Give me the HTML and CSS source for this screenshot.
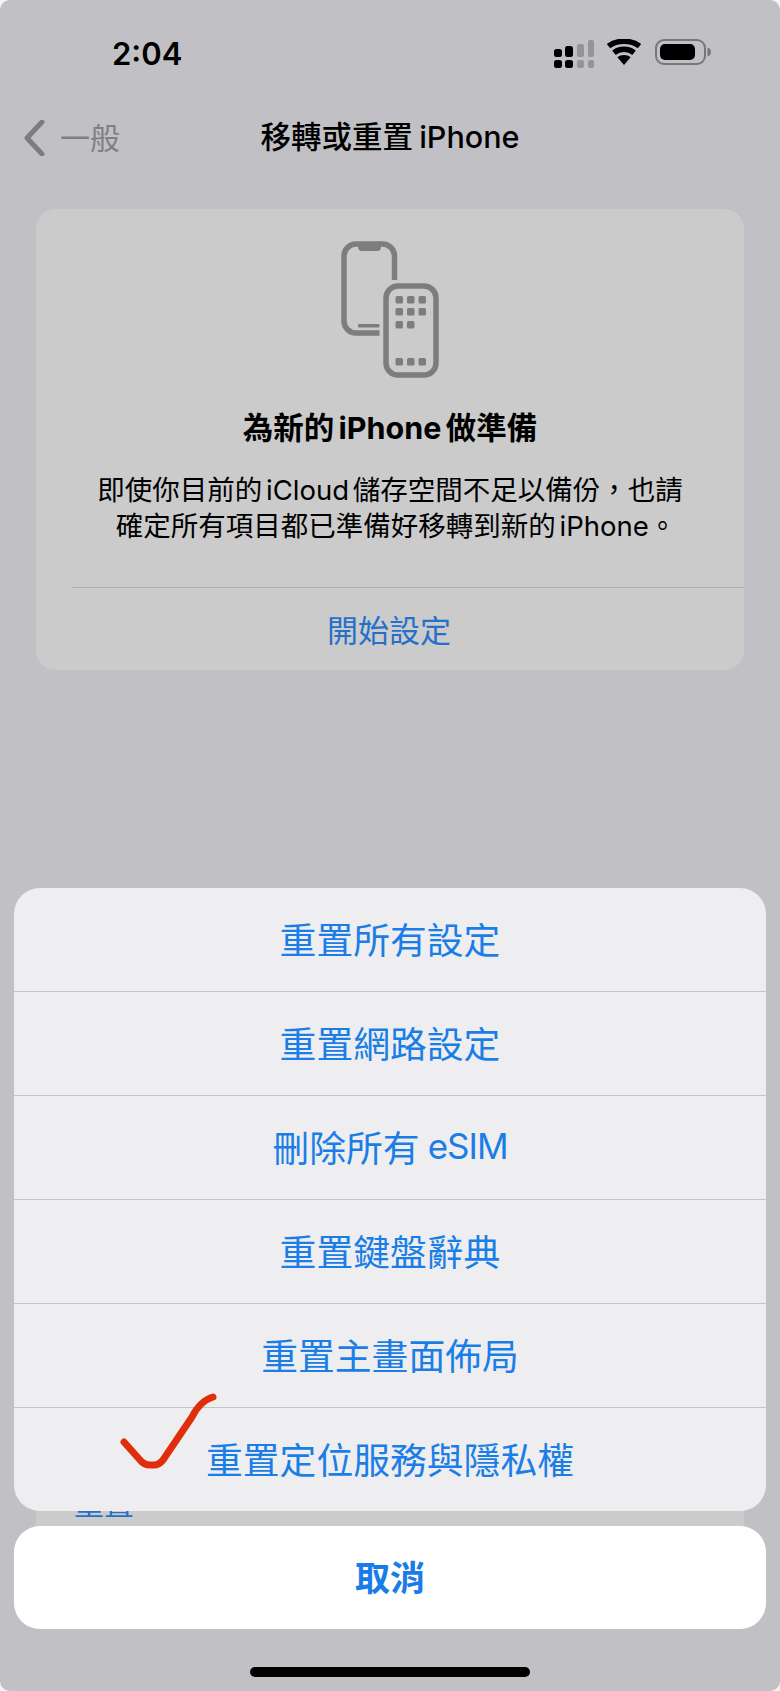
FILE: index.html
```html
<!DOCTYPE html>
<html lang="zh-Hant">
<head>
<meta charset="utf-8">
<title>移轉或重置 iPhone</title>
<link rel="stylesheet" href="styles.css">
</head>
<body>
<div class="screen">
  <header class="status">
    <span class="time">2:04</span>
    <div class="status-icons">
      <svg class="signal" width="42" height="30" viewBox="0 0 42 30">
        <rect x="1" y="10" width="8" height="8" rx="2.5"/>
        <rect x="1" y="21" width="8" height="8" rx="2.5"/>
        <rect x="12" y="7" width="8" height="11" rx="2.5"/>
        <rect x="12" y="21" width="8" height="8" rx="2.5"/>
        <g class="dim">
          <rect x="24" y="5" width="7" height="13" rx="2"/>
          <rect x="24" y="21" width="7" height="8" rx="2"/>
          <rect x="35" y="1" width="6" height="17" rx="2"/>
          <rect x="35" y="21" width="6" height="8" rx="2"/>
        </g>
      </svg>
      <svg class="wifi" width="36" height="26" viewBox="0 0 36 26">
        <path d="M18 26 11.400 18.200C15 15.200 21 15.200 24.600 18.200Z"/>
        <path d="M8 13.800 C13.300 9.200 22.700 9.200 28 13.800" class="arc"/>
        <path d="M2.500 7.200 C10.800 0.600 25.200 0.600 33.500 7.200" class="arc"/>
      </svg>
      <svg class="battery" width="57" height="26" viewBox="0 0 57 26">
        <rect x="1" y="1" width="49" height="24" rx="8" class="shell"/>
        <rect x="5" y="5" width="35" height="16" rx="5"/>
        <path d="M52.500 8.500C55 9 56 11 56 13S55 17 52.500 17.500Z" class="nub"/>
      </svg>
    </div>
  </header>

  <nav class="nav">
    <div class="back">
      <svg width="22" height="36" viewBox="0 0 22 36"><path d="M19 2 4 18 19 34"/></svg>
      <span>一般</span>
    </div>
    <h1 class="nav-title">移轉或重置 iPhone</h1>
  </nav>

  <section class="card card-main">
    <svg class="phones" width="100" height="138" viewBox="40 20 100 138">
      <path class="ph" d="M94.500 60V36A12 12 0 0 0 82.500 24H56A12 12 0 0 0 44 36V101A12 12 0 0 0 56 113H79.500"/>
      <path class="fill" d="M58 24H81V27Q81 31 77 31H62Q58 31 58 27Z"/>
      <rect class="fill" x="58" y="104" width="21.500" height="3.500" rx="1"/>
      <rect class="ph" x="86" y="66" width="50" height="89" rx="12"/>
      <g class="fill">
        <rect x="95.500" y="76" width="7.500" height="7.500" rx="1.500"/>
        <rect x="107" y="76" width="7.500" height="7.500" rx="1.500"/>
        <rect x="118.500" y="76" width="7.500" height="7.500" rx="1.500"/>
        <rect x="95.500" y="88" width="7.500" height="7.500" rx="1.500"/>
        <rect x="107" y="88" width="7.500" height="7.500" rx="1.500"/>
        <rect x="118.500" y="88" width="7.500" height="7.500" rx="1.500"/>
        <rect x="95.500" y="101" width="7.500" height="7.500" rx="1.500"/>
        <rect x="107" y="101" width="7.500" height="7.500" rx="1.500"/>
        <rect x="95.500" y="138" width="7.500" height="7.500" rx="1.500"/>
        <rect x="107" y="138" width="7.500" height="7.500" rx="1.500"/>
        <rect x="118.500" y="138" width="7.500" height="7.500" rx="1.500"/>
      </g>
    </svg>
    <h2 class="card-title">為新的 iPhone 做準備</h2>
    <p class="card-body">即使你目前的 iCloud 儲存空間不足以備份，也請<br>確定所有項目都已準備好移轉到新的 iPhone<span class="stop">。</span></p>
    <div class="card-action"><span>開始設定</span></div>
  </section>

  <section class="card card-lower">
    <span class="lower-link">重置</span>
  </section>

  <div class="sheet-wrap">
    <div class="sheet">
      <div class="sheet-row">重置所有設定</div>
      <div class="sheet-row">重置網路設定</div>
      <div class="sheet-row">刪除所有 <span class="latin">eSIM</span></div>
      <div class="sheet-row">重置鍵盤辭典</div>
      <div class="sheet-row">重置主畫面佈局</div>
      <div class="sheet-row">重置定位服務與隱私權</div>
    </div>
    <div class="cancel">取消</div>
  </div>

  <svg class="check" width="110" height="90" viewBox="115 1390 110 90">
    <path d="M124 1442 140 1460Q144 1465 150 1465H154Q159 1465 163 1460L192 1417Q200 1401 213 1397"/>
  </svg>

  <div class="home"></div>
</div>
</body>
</html>
```

FILE: styles.css
```css
* { box-sizing: border-box; }

html, body {
  margin: 0;
  padding: 0;
  background: #f4f4f6;
}

body {
  font-family: "Inter", "Noto Sans CJK TC", "Noto Sans", sans-serif;
  color: #000;
}

.screen {
  position: relative;
  width: 780px;
  height: 1691px;
  overflow: hidden;
  background: #c1c0c5;
  border-radius: 10px;
}

.status {
  height: 106px;
  padding: 35px 68px 0 112px;
  display: flex;
  justify-content: space-between;
  align-items: flex-start;
}

.time {
  font-size: 31px;
  font-weight: 600;
  line-height: 38px;
}

.status-icons {
  display: flex;
  align-items: flex-start;
  gap: 13px;
  padding-top: 2px;
}

.signal { margin-top: 2px; margin-right: -2px; fill: #000; }
.signal .dim { fill: #94949a; }

.wifi { fill: #000; margin-top: 2px; }
.wifi .arc { fill: none; stroke: #000; stroke-width: 5.500; }

.battery { margin-top: 2px; fill: #000; }
.battery .shell { fill: none; stroke: #77777b; stroke-width: 2; }
.battery .nub { fill: #77777b; }

.nav {
  position: relative;
  height: 103px;
  display: flex;
  align-items: flex-start;
  justify-content: center;
}

.back {
  position: absolute;
  left: 23px;
  top: 13px;
  display: flex;
  align-items: center;
  gap: 15px;
  color: #808084;
  font-size: 30px;
  line-height: 38px;
}

.back svg { fill: none; stroke: #7c7c80; stroke-width: 5; stroke-linecap: round; stroke-linejoin: round; }

.nav-title {
  margin: 11px 0 0;
  font-size: 30.500px;
  font-weight: 500;
  line-height: 40px;
  word-spacing: -2px;
}

.card {
  width: 708px;
  margin: 0 36px;
  background: #cbcbcc;
  border-radius: 20px;
}

.card-main {
  height: 461px;
  padding-top: 31px;
}

.phones { display: block; margin: 0 auto; }
.phones .ph { fill: none; stroke: #7d7d7d; stroke-width: 5.500; }
.phones .fill { fill: #7d7d7d; }

.card-title {
  margin: 30px 0 0;
  text-align: center;
  font-size: 30.500px;
  font-weight: 700;
  line-height: 40px;
  word-spacing: -3px;
}

.card-body {
  margin: 24px 0 0;
  text-align: center;
  font-size: 27.500px;
  line-height: 36px;
  word-spacing: -4px;
}

.stop { letter-spacing: -12px; }

.card-action {
  margin: 43px 0 0 36px;
  height: 81px;
  padding-right: 38px;
  border-top: 1px solid #b2b2b4;
  display: flex;
  align-items: center;
  justify-content: center;
  color: #2570c8;
  font-size: 31px;
}

.card-lower {
  margin-top: 771px;
  height: 130px;
  padding: 43px 38px 0;
}

.lower-link {
  color: #2570c8;
  font-size: 30px;
  line-height: 40px;
}

.sheet-wrap {
  position: absolute;
  left: 14px;
  top: 888px;
  width: 752px;
  display: flex;
  flex-direction: column;
  gap: 15px;
}

.sheet {
  background: #eeeef0;
  border-radius: 26px;
  overflow: hidden;
}

.sheet-row {
  height: 104px;
  padding-bottom: 4px;
  display: flex;
  align-items: center;
  justify-content: center;
  gap: 8px;
  color: #1b7ee6;
  font-size: 36.800px;
  border-top: 1px solid #c5c5c8;
}

.sheet-row:first-child { height: 103px; border-top: 0; }

.latin { font-size: 35px; letter-spacing: -1px; }

.cancel {
  height: 103px;
  padding-bottom: 4px;
  background: #fff;
  border-radius: 26px;
  display: flex;
  align-items: center;
  justify-content: center;
  color: #1a7ce6;
  font-size: 35px;
  font-weight: 700;
}

.check {
  position: absolute;
  left: 115px;
  top: 1390px;
  fill: none;
  stroke: #e02e0c;
  stroke-width: 7;
  stroke-linecap: round;
  stroke-linejoin: round;
}

.home {
  position: absolute;
  left: 250px;
  top: 1667px;
  width: 280px;
  height: 10px;
  border-radius: 5px;
  background: #000;
}
```
